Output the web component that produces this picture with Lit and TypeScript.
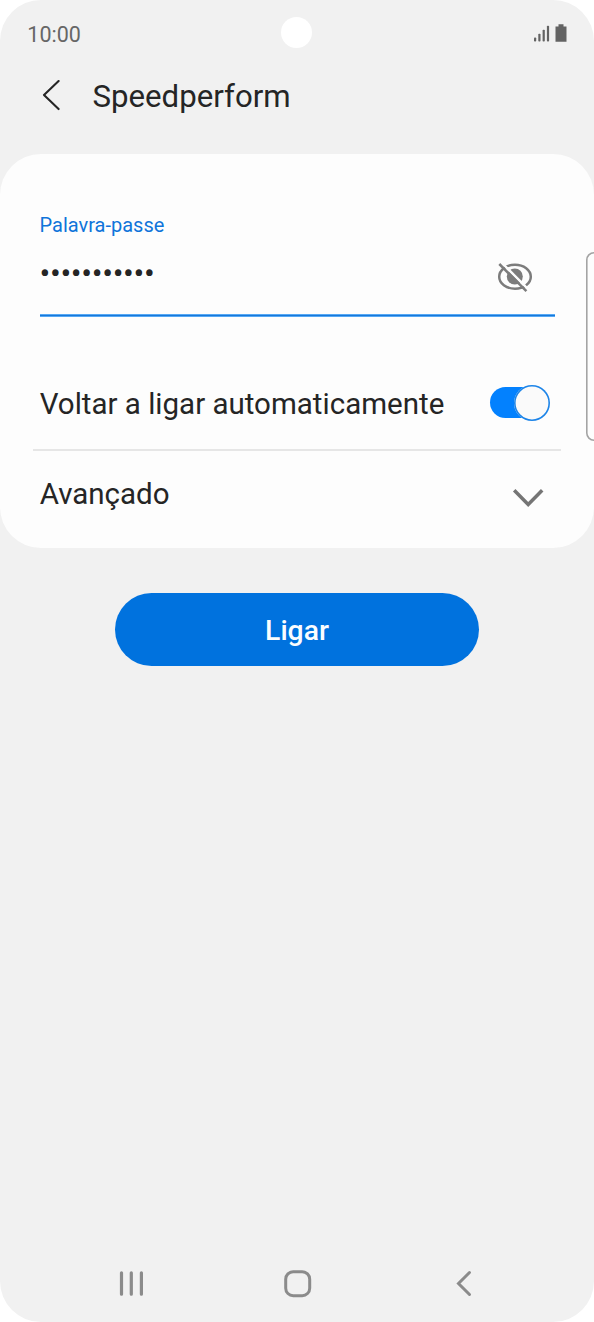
import { LitElement, html, css } from "lit";
import { customElement, state } from "lit/decorators.js";

@customElement("app-root")
export class AppRoot extends LitElement {
  static styles = css`
    :host {
      display: block;
      background: #fff;
      font-family: Roboto, "Noto Sans", sans-serif;
      color: #252525;
    }
    * { box-sizing: border-box; }
    svg { display: block; flex: none; }
    button {
      font: inherit;
      color: inherit;
      border: 0;
      background: none;
      padding: 0;
      margin: 0;
      display: block;
    }
    .screen {
      position: relative;
      display: flex;
      flex-direction: column;
      width: 594px;
      height: 1322px;
      border-radius: 41px;
      overflow: hidden;
      background: #f1f1f1;
    }
    .status {
      display: grid;
      grid-template-columns: 1fr 31px 1fr;
      align-items: start;
      height: 66px;
      padding: 17px 26px 0 27.3px;
    }
    .clock {
      font-size: 21.5px;
      line-height: 35px;
      color: #666;
    }
    .camera {
      width: 31px;
      height: 31px;
      margin-left: -0.8px;
      border-radius: 50%;
      background: #fff;
    }
    .signals { justify-self: end; margin-top: 7px; }
    .header {
      display: flex;
      align-items: center;
      gap: 30.5px;
      height: 60px;
      padding-left: 41px;
      margin-bottom: 28px;
    }
    .title {
      margin: 0;
      padding-top: 1px;
      font-size: 31.2px;
      line-height: 40px;
      font-weight: 400;
    }
    .card {
      height: 394px;
      padding: 58px 33px 0;
      border-radius: 41px;
      background: #fdfdfd;
    }
    .field {
      margin: 0 6.5px;
      height: 105px;
      background: linear-gradient(#55a8f4 1px, #1778da 1px, #1778da 2px, #55a8f4 2px) bottom / 100% 3px no-repeat;
    }
    .label {
      font-size: 20px;
      line-height: 26px;
      color: #0f74da;
    }
    .entry {
      display: flex;
      justify-content: space-between;
      padding-right: 21.5px;
    }
    .secret {
      font-size: 32px;
      letter-spacing: -0.35px;
      line-height: 40px;
      padding-top: 15px;
    }
    .reveal { padding-top: 22px; }
    .row {
      display: flex;
      align-items: center;
      justify-content: space-between;
      padding: 0 11px 0 6.7px;
      font-size: 29.5px;
      line-height: 40px;
    }
    .auto {
      height: 134px;
      padding-top: 40px;
      border-bottom: 2px solid #e6e6e6;
    }
    .auto .text { padding-top: 2px; }
    .more { height: 86px; padding-right: 17px; }
    .chevron { margin-top: 8px; }
    .switch {
      display: flex;
      align-items: center;
      width: 60px;
      height: 36px;
      margin-top: -1px;
    }
    .track {
      display: flex;
      align-items: center;
      justify-content: flex-end;
      width: 59.5px;
      height: 31px;
      border-radius: 16px;
      background: linear-gradient(to right, #0381fe 42px, transparent 42px);
    }
    .thumb {
      flex: none;
      width: 36px;
      height: 36px;
      border-radius: 50%;
      box-shadow: inset 0 0 0 1.6px #1c84e8;
      background: #fafafa;
    }
    .connect {
      align-self: center;
      width: 363.5px;
      height: 73px;
      margin-top: 45px;
      border-radius: 37px;
      background: #0072de;
      color: #fafdff;
      font-size: 28.3px;
      font-weight: 500;
      line-height: 76px;
      text-align: center;
    }
    .nav {
      display: grid;
      grid-template-columns: 27px 28px 17px;
      column-gap: 138.5px;
      align-items: center;
      margin-top: auto;
      height: 77px;
      padding-left: 118px;
    }
    .back { margin-left: 6px; }
    .edge {
      position: absolute;
      left: 586px;
      top: 252px;
      width: 20px;
      height: 188.5px;
      box-shadow: inset 0 0 0 1.6px #a4a4a4;
      border-radius: 8px;
      background: #fdfdfd;
    }
  `;

  @state() private password = "•".repeat(11);

  render() {
    return html`
      <div class="screen">
        <div class="status">
          <span class="clock">10:00</span>
          <span class="camera"></span>
          <svg class="signals" width="34" height="19" viewBox="0 0 34 19" fill="#636363">
            <rect x="0" y="13.5" width="2.2" height="4" rx=".8" />
            <rect x="4.3" y="9.7" width="2.2" height="7.8" rx=".8" />
            <rect x="8.6" y="5.8" width="2.2" height="11.7" rx=".8" />
            <rect x="12.9" y="1.8" width="2.2" height="15.7" rx=".8" />
            <path d="M24.5 0.3h5v2.2h3v15.3h-11V2.5h3z" />
          </svg>
        </div>
        <header class="header">
          <button aria-label="Voltar">
            <svg width="21" height="32" viewBox="0 0 21 32" fill="none" stroke="#252525" stroke-width="2.1" stroke-linecap="round" stroke-linejoin="round">
              <path d="M17.6 1.1L3 15.1 17.6 29.1" />
            </svg>
          </button>
          <h1 class="title">Speedperform</h1>
        </header>
        <main class="card">
          <div class="field">
            <div class="label">Palavra-passe</div>
            <div class="entry">
              <span class="secret">${this.password}</span>
              <button class="reveal" aria-label="Mostrar palavra-passe">
                <svg width="36" height="32" viewBox="0 0 36 32" fill="none">
                  <ellipse cx="18" cy="15.7" rx="15.8" ry="12" stroke="#7c7c7c" stroke-width="2.5" />
                  <circle cx="17.8" cy="15.5" r="8" fill="#7c7c7c" />
                  <path d="M4 1L31.3 28.3" stroke="#fdfdfd" stroke-width="2.4" />
                  <path d="M2.3 3L29.4 30.1" stroke="#7c7c7c" stroke-width="2.5" />
                </svg>
              </button>
            </div>
          </div>
          <div class="row auto">
            <span class="text">Voltar a ligar automaticamente</span>
            <span class="switch"><span class="track"><span class="thumb"></span></span></span>
          </div>
          <div class="row more">
            <span>Avançado</span>
            <svg class="chevron" width="32" height="20" viewBox="0 0 32 20" fill="none" stroke="#757575" stroke-width="3.5">
              <path d="M2.2 2.2l14 14.3 14-14.3" />
            </svg>
          </div>
        </main>
        <button class="connect">Ligar</button>
        <nav class="nav">
          <svg width="27" height="28" viewBox="0 0 27 28" stroke="#8b8b8b" stroke-width="3.2" stroke-linecap="round">
            <path d="M3.5 2.8v21.4M13.3 2.8v21.4M23.4 2.8v21.4" />
          </svg>
          <svg width="28" height="28" viewBox="0 0 28 28" fill="none" stroke="#8b8b8b" stroke-width="3">
            <rect x="1.7" y="1.7" width="24" height="24" rx="7.5" />
          </svg>
          <svg class="back" width="17" height="28" viewBox="0 0 17 28" fill="none" stroke="#8b8b8b" stroke-width="3" stroke-linecap="round">
            <path d="M13.5 2.5L2.5 13.5l11 11" />
          </svg>
        </nav>
        <div class="edge"></div>
      </div>
    `;
  }
}
